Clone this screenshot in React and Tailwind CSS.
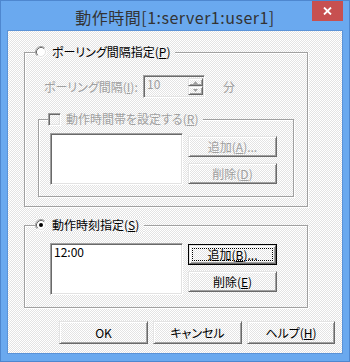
import React from 'react';

const dither = 'bg-[conic-gradient(#fff_25%,#e3e3e3_0_50%,#fff_0_75%,#e3e3e3_0)] bg-[length:2px_2px]';
const raised = 'border border-t-[#e3e3e3] border-l-[#e3e3e3] border-r-[#696969] border-b-[#696969] shadow-[inset_1px_1px_0_#fff,inset_-1px_-1px_0_#a0a0a0]';
const sunken = 'border border-t-[#a0a0a0] border-l-[#a0a0a0] border-r-white border-b-white shadow-[inset_1px_1px_0_#696969,inset_-1px_-1px_0_#e3e3e3]';
const etched = 'border border-[#a0a0a0] shadow-[inset_1px_1px_0_#fff,1px_1px_0_#fff]';

const Radio = ({ checked }) => (
  <svg width="12" height="12" viewBox="0 0 12 12" className="shrink-0">
    <circle cx="6" cy="6" r="5" fill="#fff" />
    <path d="M2.11 9.89A5.5 5.5 0 0 1 9.89 2.11" stroke="#a0a0a0" fill="none" />
    <path d="M9.89 2.11A5.5 5.5 0 0 1 2.11 9.89" stroke="#fff" fill="none" />
    <path d="M2.82 9.18A4.5 4.5 0 0 1 9.18 2.82" stroke="#696969" fill="none" />
    <path d="M9.18 2.82A4.5 4.5 0 0 1 2.82 9.18" stroke="#e3e3e3" fill="none" />
    {checked && <circle cx="6" cy="6" r="2" fill="#000" />}
  </svg>
);

const Button = ({ children, disabled, isDefault, className = '' }) => {
  const text = disabled ? 'text-[#a0a0a0]' : 'text-black';
  if (isDefault) {
    return (
      <div className={`border border-black ${className}`}>
        <div className={`relative h-full flex items-center justify-center ${dither} ${raised} ${text}`}>
          <span className="absolute inset-[2px] border border-dotted border-black" />
          {children}
        </div>
      </div>
    );
  }
  return (
    <div className={`flex items-center justify-center ${dither} ${raised} ${text} ${className}`}>
      {children}
    </div>
  );
};

const Arrow = ({ up }) => (
  <svg width="5" height="3" viewBox="0 0 5 3">
    <path d={up ? 'M2.5 0L5 3H0z' : 'M0 0h5L2.5 3z'} fill="#a0a0a0" />
  </svg>
);

const App = () => {
  return (
    <div className="w-[350px] h-[362px] border border-[#4e87cf] bg-[#6aa9ef] flex flex-col font-['Noto_Sans_CJK_JP','Noto_Sans',sans-serif] [font-feature-settings:'palt'] text-[12px] leading-[14px] select-none">
      {/* Title bar */}
      <div className="relative h-[29px] flex items-center justify-center">
        <span className="text-[16px] leading-[18px] tracking-[0.5px] text-[#333] mt-[2px] [font-feature-settings:normal]">動作時間[1:server1:user1]</span>
        <div className="absolute right-[6px] top-0 w-[31px] h-[20px] bg-[#c75050] flex items-center justify-center">
          <svg width="9" height="8" viewBox="0 0 9 8">
            <path d="M1 0.5L8 7.5M8 0.5L1 7.5" stroke="#fff" strokeWidth="1.8" />
          </svg>
        </div>
      </div>

      {/* Client area */}
      <div className="ml-[6px] w-[336px] h-[324px] border border-[#5a93d8]">
        <div className={`w-[334px] h-[322px] flex flex-col ${dither}`}>
          {/* Polling group */}
          <div className={`relative mt-[21px] ml-[16px] w-[284px] h-[155px] ${etched}`}>
            <div className={`absolute left-[10px] top-[-9px] h-[16px] flex items-center gap-[5px] pr-[5px] ${dither}`}>
              <Radio />
              <span>ポーリング間隔指定(<u>P</u>)</span>
            </div>

            <div className="mt-[22px] ml-[19px] flex items-center h-[23px] text-[#a0a0a0]">
              <span className="w-[99px] shrink-0 whitespace-nowrap">ポーリング間隔(<u>I</u>):</span>
              <div className={`w-[62px] h-[23px] shrink-0 flex ${sunken} ${dither}`}>
                <span className="flex-1 pl-[3px] pt-[1px]">10</span>
                <div className="w-[15px] my-[2px] mr-[1px] flex flex-col">
                  <div className={`h-[9px] flex items-center justify-center ${raised}`}><Arrow up /></div>
                  <div className={`h-[10px] flex items-center justify-center ${raised}`}><Arrow /></div>
                </div>
              </div>
              <span className="ml-[18px]">分</span>
            </div>

            {/* Time range group */}
            <div className={`relative mt-[21px] ml-[13px] w-[256px] h-[78px] ${etched}`}>
              <div className={`absolute left-[9px] top-[-9px] h-[16px] flex items-center gap-[5px] pr-[5px] text-[#a0a0a0] ${dither}`}>
                <div className={`w-[13px] h-[13px] ${sunken} ${dither}`} />
                <span>動作時間帯を設定する(<u>R</u>)</span>
              </div>
              <div className="flex pt-[13px] pl-[11px]">
                <div className={`w-[133px] h-[52px] bg-white ${sunken}`} />
                <div className="ml-[5px] mt-[3px] flex flex-col gap-[6px]">
                  <Button disabled className="w-[89px] h-[21px]">追加(<u>A</u>)...</Button>
                  <Button disabled className="w-[89px] h-[21px]">削除(<u>D</u>)</Button>
                </div>
              </div>
            </div>
          </div>

          {/* Fixed time group */}
          <div className={`relative mt-[18px] ml-[16px] w-[284px] h-[83px] ${etched}`}>
            <div className={`absolute left-[10px] top-[-9px] h-[16px] flex items-center gap-[5px] pr-[5px] ${dither}`}>
              <Radio checked />
              <span>動作時刻指定(<u>S</u>)</span>
            </div>
            <div className="flex pt-[17px] pl-[25px]">
              <div className={`w-[133px] h-[52px] bg-white ${sunken}`}>
                <div className="pl-[3px] pt-[1px] leading-[13px]">12:00</div>
              </div>
              <div className="ml-[5px] mt-[1px] flex flex-col gap-[6px]">
                <Button isDefault className="w-[89px] h-[21px]">追加(<u>B</u>)...</Button>
                <Button className="w-[89px] h-[21px]">削除(<u>E</u>)</Button>
              </div>
            </div>
          </div>

          {/* Dialog buttons */}
          <div className="mt-[13px] ml-[51px] flex gap-[5px]">
            <Button className="w-[89px] h-[23px]">OK</Button>
            <Button className="w-[89px] h-[23px]">キャンセル</Button>
            <Button className="w-[88px] h-[23px]">ヘルプ(<u>H</u>)</Button>
          </div>
        </div>
      </div>
    </div>
  );
};

export default App;
